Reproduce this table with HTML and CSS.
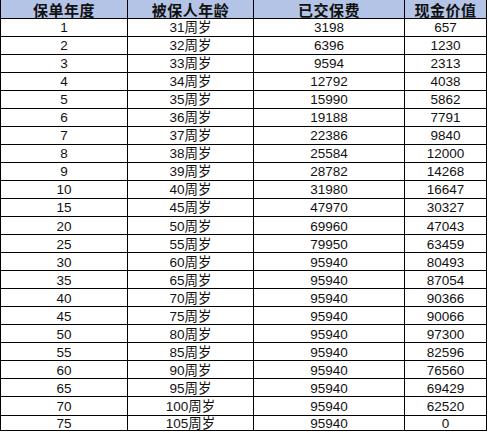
FILE: index.html
```html
<!DOCTYPE html>
<html lang="zh-CN">
<head>
<meta charset="utf-8">
<title>现金价值表</title>
<link rel="stylesheet" href="styles.css">
</head>
<body>
<div class="sheet">
  <div class="hd">保单年度</div><div class="hd">被保人年龄</div><div class="hd">已交保费</div><div class="hd">现金价值</div>
  <div class="c">1</div><div class="c">31周岁</div><div class="c">3198</div><div class="c">657</div>
  <div class="c">2</div><div class="c">32周岁</div><div class="c">6396</div><div class="c">1230</div>
  <div class="c">3</div><div class="c">33周岁</div><div class="c">9594</div><div class="c">2313</div>
  <div class="c">4</div><div class="c">34周岁</div><div class="c">12792</div><div class="c">4038</div>
  <div class="c">5</div><div class="c">35周岁</div><div class="c">15990</div><div class="c">5862</div>
  <div class="c">6</div><div class="c">36周岁</div><div class="c">19188</div><div class="c">7791</div>
  <div class="c">7</div><div class="c">37周岁</div><div class="c">22386</div><div class="c">9840</div>
  <div class="c">8</div><div class="c">38周岁</div><div class="c">25584</div><div class="c">12000</div>
  <div class="c">9</div><div class="c">39周岁</div><div class="c">28782</div><div class="c">14268</div>
  <div class="c">10</div><div class="c">40周岁</div><div class="c">31980</div><div class="c">16647</div>
  <div class="c">15</div><div class="c">45周岁</div><div class="c">47970</div><div class="c">30327</div>
  <div class="c">20</div><div class="c">50周岁</div><div class="c">69960</div><div class="c">47043</div>
  <div class="c">25</div><div class="c">55周岁</div><div class="c">79950</div><div class="c">63459</div>
  <div class="c">30</div><div class="c">60周岁</div><div class="c">95940</div><div class="c">80493</div>
  <div class="c">35</div><div class="c">65周岁</div><div class="c">95940</div><div class="c">87054</div>
  <div class="c">40</div><div class="c">70周岁</div><div class="c">95940</div><div class="c">90366</div>
  <div class="c">45</div><div class="c">75周岁</div><div class="c">95940</div><div class="c">90066</div>
  <div class="c">50</div><div class="c">80周岁</div><div class="c">95940</div><div class="c">97300</div>
  <div class="c">55</div><div class="c">85周岁</div><div class="c">95940</div><div class="c">82596</div>
  <div class="c">60</div><div class="c">90周岁</div><div class="c">95940</div><div class="c">76560</div>
  <div class="c">65</div><div class="c">95周岁</div><div class="c">95940</div><div class="c">69429</div>
  <div class="c">70</div><div class="c">100周岁</div><div class="c">95940</div><div class="c">62520</div>
  <div class="c">75</div><div class="c">105周岁</div><div class="c">95940</div><div class="c">0</div>
</div>
</body>
</html>
```
FILE: styles.css
```css
html, body {
  margin: 0;
  padding: 0;
  background: #ffffff;
}
.sheet {
  display: grid;
  grid-template-columns: 126px 125px 150px 81px;
  grid-template-rows: 18px repeat(22, 1fr);
  height: 430px;
  width: 485px;
  gap: 1px;
  background: #000000;
  border-left: 1px solid #000;
  border-right: 1px solid #000;
  border-bottom: 1px solid #000;
  font-family: "Liberation Sans", "Noto Sans CJK SC", sans-serif;
  font-size: 13.5px;
  color: #111;
}
.hd {
  background: #b4c4e6;
  font-family: "Noto Sans CJK SC", sans-serif;
  font-weight: bold;
  font-size: 15px;
  color: #111;
  display: flex;
  align-items: center;
  justify-content: center;
  letter-spacing: 0.5px;
}
.c {
  background: #ffffff;
  display: flex;
  align-items: center;
  justify-content: center;
  line-height: 1;
  padding-top: 1px;
}
```
